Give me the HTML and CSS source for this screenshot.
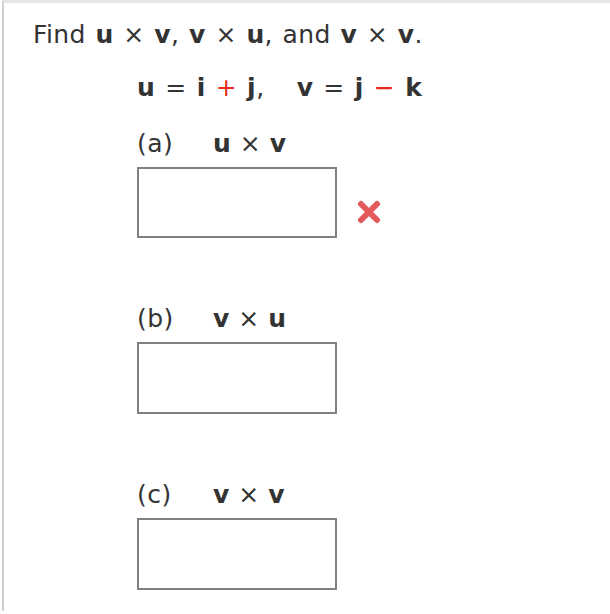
FILE: index.html
```html
<!DOCTYPE html>
<html>
<head>
<meta charset="utf-8">
<link rel="stylesheet" href="styles.css">
</head>
<body>
<div class="frame">
  <p class="prompt">Find <b>u</b> × <b>v</b>, <b>v</b> × <b>u</b>, and <b>v</b> × <b>v</b>.</p>
  <p class="given"><b>u</b> = <b>i</b> <span class="red">+</span> <b>j</b>,<span class="gap"></span><b>v</b> = <b>j</b> <span class="red">−</span> <b>k</b></p>

  <div class="part">
    <div class="label"><span class="tag">(a)</span><span class="expr"><b>u</b> × <b>v</b></span></div>
    <div class="answer-row">
      <div class="box"></div>
      <svg class="wrong" width="28" height="28" viewBox="0 0 28 28"><path d="M6 6 L22 22 M22 6 L6 22" stroke="#e0494c" stroke-width="6" stroke-linecap="round" opacity="0.9"/></svg>
    </div>
  </div>

  <div class="part">
    <div class="label"><span class="tag">(b)</span><span class="expr"><b>v</b> × <b>u</b></span></div>
    <div class="answer-row"><div class="box"></div></div>
  </div>

  <div class="part">
    <div class="label"><span class="tag">(c)</span><span class="expr"><b>v</b> × <b>v</b></span></div>
    <div class="answer-row"><div class="box"></div></div>
  </div>
</div>
</body>
</html>
```

FILE: styles.css
```css
html, body {
  margin: 0;
  padding: 0;
  background: #fff;
}
body {
  font-family: "DejaVu Sans", Verdana, sans-serif;
  color: #333;
  font-size: 25px;
}
.frame {
  margin-left: 2px;
  border-top: 3px solid #e6e6e6;
  border-left: 2px solid #cfcfcf;
  height: 611px;
  box-sizing: border-box;
}
p { margin: 0; }
.prompt {
  padding-left: 29px;
  padding-top: 17px;
  line-height: 30px;
  letter-spacing: 0.4px;
  word-spacing: 1.3px;
}
.given {
  padding-left: 133px;
  padding-top: 23px;
  line-height: 30px;
  letter-spacing: 0.5px;
  word-spacing: 1.5px;
}
.red { color: #e8291c; }
.gap { display: inline-block; width: 32px; }
.part {
  padding-left: 133px;
}
.label {
  display: flex;
  align-items: center;
  height: 30px;
  margin-top: 25px;
}
.part + .part .label { margin-top: 65px; }
.tag { width: 76px; letter-spacing: 0.5px; }
.expr { word-spacing: 1px; }
.answer-row {
  display: flex;
  align-items: center;
  margin-top: 9px;
}
.box {
  width: 200px;
  height: 71px;
  box-sizing: border-box;
  border: 2px solid #808080;
}
.part + .part .box { height: 72px; }
.wrong {
  margin-left: 18px;
  margin-top: 18px;
}
```
